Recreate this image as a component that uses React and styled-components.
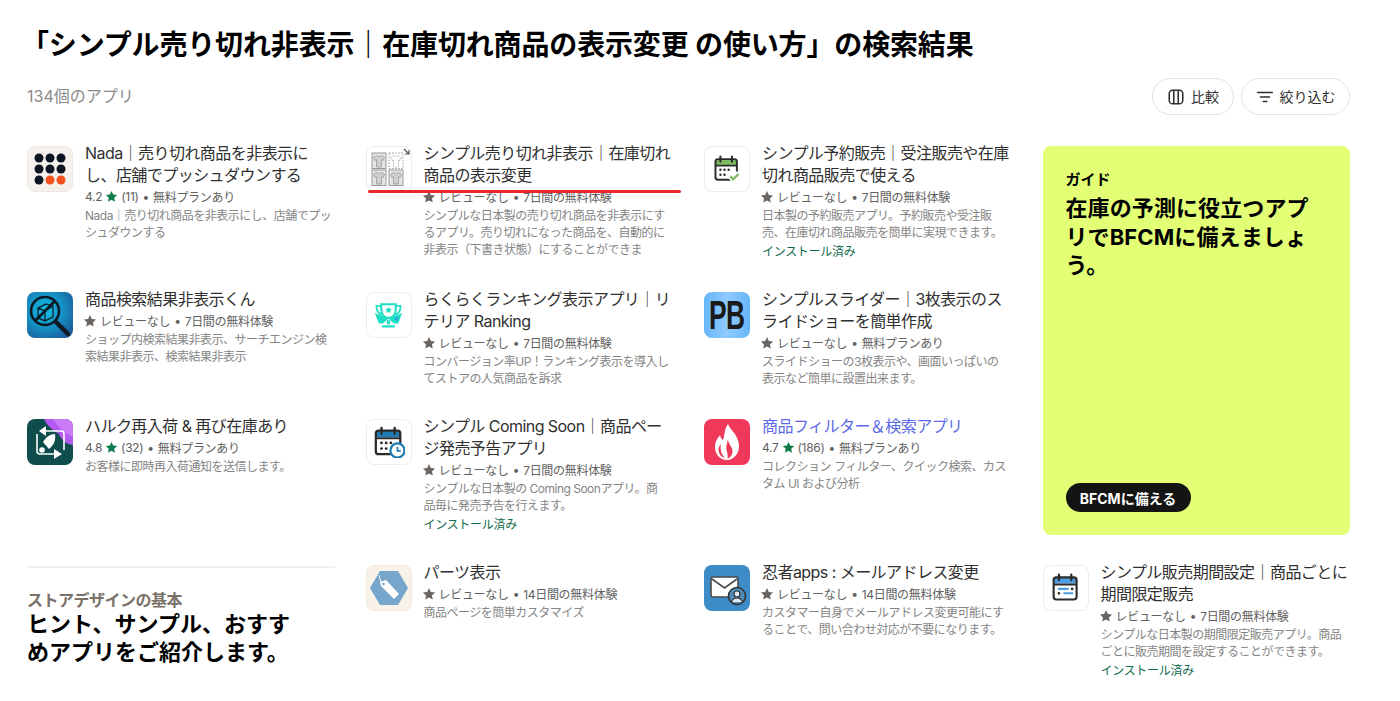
import React from 'react';
import styled, { createGlobalStyle } from 'styled-components';

const GlobalStyle = createGlobalStyle`
  html, body {
    margin: 0;
    padding: 0;
    background: #fff;
    font-family: Inter, "Noto Sans CJK JP", sans-serif;
    font-feature-settings: "pkna";
    color: #303030;
  }
`;

const Page = styled.main`
  padding: 27px 50px 0 27px;
  height: 674px;
  overflow: hidden;
`;

const Heading = styled.h1`
  margin: 0 0 15px -6px;
  font-size: 28px;
  line-height: 36px;
  font-weight: 700;
  letter-spacing: -0.15px;
  color: #000;
  white-space: nowrap;
`;

const Toolbar = styled.div`
  display: flex;
  align-items: center;
  justify-content: space-between;
  height: 37px;
  margin-bottom: 31px;
`;

const Count = styled.span`
  padding-bottom: 3px;
  font-size: 16px;
  color: #8a8a8a;
`;

const Actions = styled.div`
  display: flex;
  gap: 7px;
`;

const PillButton = styled.button`
  display: flex;
  align-items: center;
  justify-content: center;
  gap: 6px;
  width: ${p => p.$width}px;
  height: 37px;
  padding: 0 0 2px;
  border: 1px solid #e3e3e3;
  border-radius: 19px;
  background: #fff;
  font: inherit;
  font-size: 14px;
  color: #303030;

  svg {
    flex: none;
    margin-top: 2px;
  }
`;

const Results = styled.section`
  display: grid;
  grid-template-columns: repeat(4, 1fr);
  grid-template-rows: 116px 97px 116px auto;
  column-gap: 31px;
  row-gap: 30px;
`;

const Card = styled.article`
  position: relative;
  display: flex;
  gap: 12px;
  min-width: 0;
`;

const Tile = styled.div`
  flex: none;
  display: flex;
  align-items: center;
  justify-content: center;
  width: 46px;
  height: 46px;
  box-sizing: border-box;
  border-radius: 8px;
  overflow: hidden;
  background: ${p => p.$bg || '#fff'};
  border: ${p => (p.$line ? `1px solid ${p.$line}` : 'none')};

  svg {
    display: block;
    flex: none;
  }
`;

const Monogram = styled.span`
  font-family: "Liberation Sans", sans-serif;
  font-size: 40px;
  line-height: 46px;
  font-weight: 700;
  letter-spacing: -1px;
  color: #1a1a1a;
  transform: scaleX(0.66);
`;

const Body = styled.div`
  min-width: 0;
  flex: 1;
  margin-top: -4px;
`;

const Title = styled.div`
  font-size: 16px;
  line-height: 22px;
  letter-spacing: -0.55px;
  color: ${p => (p.$link ? '#5c6ae6' : '#303030')};
  white-space: pre;
`;

const Meta = styled.div`
  display: flex;
  align-items: center;
  gap: 3px;
  height: 21px;
  font-size: 12px;
  letter-spacing: -0.3px;
  color: #616161;
  white-space: nowrap;
`;

const Bullet = styled.span`
  margin: 0 1px;
`;

const StarShape = styled.svg`
  flex: none;
  margin-left: ${p => (p.$flush ? '-2px' : '0')};
`;

const Description = styled.div`
  font-size: 12px;
  line-height: 17px;
  letter-spacing: -0.5px;
  color: #858585;
  white-space: pre;
`;

const Installed = styled.div`
  margin-top: 2px;
  font-size: 12px;
  line-height: 18px;
  letter-spacing: -0.3px;
  color: #0f6b4d;
`;

const RedMark = styled.div`
  position: absolute;
  left: 2px;
  top: 44px;
  width: 313px;
  height: 3px;
  border-radius: 2px;
  background: #e8262b;
`;

const GuideCard = styled.aside`
  grid-column: 4;
  grid-row: 1 / span 3;
  display: flex;
  flex-direction: column;
  align-items: flex-start;
  padding: 24px 30px 23px 23px;
  border-radius: 8px;
  background: #e2ff75;
  color: #000;
`;

const GuideLabel = styled.div`
  font-size: 15px;
  line-height: 20px;
  font-weight: 700;
`;

const GuideTitle = styled.div`
  margin-top: 4px;
  font-size: 22px;
  line-height: 28.5px;
  font-weight: 700;
  letter-spacing: 0.1px;
  white-space: pre-line;
`;

const GuideButton = styled.button`
  margin-top: auto;
  height: 29px;
  width: 125px;
  padding: 0;
  border: 0;
  border-radius: 15px;
  background: #141414;
  color: #fff;
  font: inherit;
  font-size: 14px;
  font-weight: 700;
`;

const Basics = styled.div`
  margin-top: 1px;
  padding-top: 22px;
  border-top: 2px solid #f1f1f1;
`;

const BasicsLabel = styled.div`
  font-size: 16px;
  line-height: 20px;
  letter-spacing: -0.5px;
  font-weight: 700;
  color: #7a7168;
`;

const BasicsTitle = styled.div`
  font-size: 22px;
  line-height: 28px;
  font-weight: 700;
  color: #000;
  white-space: pre-line;
`;

const Star = ({ color = '#6b6561', size = 14, flush }) => (
  <StarShape $flush={flush} width={size} height={size} viewBox="0 0 20 20" fill={color}>
    <path d="M10 1.500l2.600 5.600 6.100.7-4.500 4.200 1.200 6L10 15l-5.400 3 1.200-6-4.500-4.200 6.100-.7z" />
  </StarShape>
);

const CalendarBase = ({ head, size = 34, children }) => (
  <svg width={size} height={size} viewBox="0 0 34 34">
    <path d="M3 12V7a2 2 0 0 1 2-2h22a2 2 0 0 1 2 2v5z" fill={head} />
    <rect x="3" y="5" width="26" height="25" rx="3" fill="none" stroke="#2b2b2b" strokeWidth="2.400" />
    <path d="M3 13h26" stroke="#2b2b2b" strokeWidth="2.200" />
    <path d="M9 2v6M23 2v6" stroke="#2b2b2b" strokeWidth="2.600" strokeLinecap="round" />
    {children}
  </svg>
);

const dots = [[9, 18], [14, 18], [19, 18], [9, 24], [14, 24]];
const Dots = () => dots.map(([cx, cy]) => <circle key={`${cx}-${cy}`} cx={cx} cy={cy} r="1.500" fill="#2b2b2b" />);

const NadaIcon = () => (
  <svg width="32" height="32" viewBox="0 0 32 32">
    {[0, 1, 2].map(r => [0, 1, 2].map(c => (
      <circle key={`${r}${c}`} cx={5 + c * 11} cy={5 + r * 11} r="4.500" fill={r === 2 && c > 0 ? '#f4511e' : '#0c1424'} />
    )))}
  </svg>
);

const Shirt = ({ x, y, dashed }) => (
  <g transform={`translate(${x} ${y})`}>
    <rect x="0" y="0" width="14" height="15.500" fill={dashed ? '#fff' : '#e4e4e4'} stroke="#9a9a9a" strokeWidth="1" strokeDasharray={dashed ? '1.500 1.500' : undefined} />
    <path d="M4.500 2.500L1.500 4.500l1.500 3 1.500-.7V14h5V6.800l1.500.7 1.500-3-3-2c-.5 1.400-3.500 1.400-4 0z" fill={dashed ? '#fff' : '#cfcfcf'} stroke="#9a9a9a" strokeWidth=".8" strokeDasharray={dashed ? '1.200 1' : undefined} />
  </g>
);

const ShirtsIcon = () => (
  <svg width="46" height="46" viewBox="0 0 46 46">
    <Shirt x={6} y={7} />
    <Shirt x={23} y={7} dashed />
    <Shirt x={6} y={24} />
    <Shirt x={23} y={24} />
    <path d="M38 3l5 5M43 4v4h-4" fill="none" stroke="#555" strokeWidth="1.200" />
  </svg>
);

const GreenCalendarIcon = () => (
  <CalendarBase head="#7dbb62" size={28}>
    <Dots />
    <circle cx="26" cy="26" r="7" fill="#fff" />
    <path d="M21 26l3.500 3.500L31 23" fill="none" stroke="#7dbb62" strokeWidth="2.800" />
  </CalendarBase>
);

const SearchIcon = () => (
  <svg width="46" height="46" viewBox="0 0 46 46">
    <defs>
      <radialGradient id="searchBg" cx="40%" cy="40%" r="70%">
        <stop offset="0%" stopColor="#12c0e4" />
        <stop offset="55%" stopColor="#1590c4" />
        <stop offset="100%" stopColor="#1c5f9c" />
      </radialGradient>
    </defs>
    <rect width="46" height="46" fill="url(#searchBg)" />
    <circle cx="18" cy="19" r="14" fill="none" stroke="#0b1a24" strokeWidth="2.600" />
    <path d="M11 16l8-4 7 2v11l-8 4-7-3zM11 16l7 3 8-5M18 19v10" fill="none" stroke="#0b2a3a" strokeWidth="1.400" />
    <path d="M8 29L28 9" stroke="#0b1a24" strokeWidth="2.600" />
    <path d="M29 30l12 12" stroke="#0b1a24" strokeWidth="4.500" strokeLinecap="round" />
  </svg>
);

const TrophyIcon = () => (
  <svg width="29" height="29" viewBox="0 0 36 36">
    <path d="M9 4h18v7c0 6-4 10-9 10s-9-4-9-10z" fill="none" stroke="#1fe0c4" strokeWidth="2.600" />
    <path d="M9 6H3c0 6 2 10 7 11M27 6h6c0 6-2 10-7 11" fill="none" stroke="#1fe0c4" strokeWidth="2.200" />
    <path d="M18 7l1.300 2.700 3 .3-2.200 2 .6 3-2.700-1.500L15.300 15l.6-3-2.200-2 3-.3z" fill="#1fe0c4" />
    <path d="M1 15l10 4 7 3-7 6H6zM35 15l-10 4-7 3 7 6h5z" fill="#1fe0c4" />
    <path d="M24 22l6-3v6z" fill="#2ba8e0" />
    <path d="M16 24h4v5h-4zM10 30h16v3H10z" fill="#1fe0c4" />
  </svg>
);

const PlainCalendarClock = () => (
  <CalendarBase head="#1f7bb0" size={32}>
    <Dots />
    <circle cx="26" cy="26" r="7.500" fill="#fff" stroke="#1f7bb0" strokeWidth="2.400" />
    <path d="M26 22v4.500h3.500" fill="none" stroke="#1f7bb0" strokeWidth="1.800" />
  </CalendarBase>
);

const HulkIcon = () => (
  <svg width="46" height="46" viewBox="0 0 46 46">
    <rect width="46" height="46" fill="#0f4d4c" />
    <path d="M17 0h29v26c-7-1-12-5-14-11-5-3-12-8-15-15z" fill="#b45af2" />
    <path d="M26 0h20v18c-8-3-15-10-20-18z" fill="#c97cf6" />
    <path d="M16 12h18a3 3 0 0 1 3 3v16M30 35H13a3 3 0 0 1-3-3V15" fill="none" stroke="#fff" strokeWidth="1.600" />
    <path d="M19 7l-7 5 7 5zM27 30l8 5-8 5z" fill="#fff" />
    <path d="M28 15c1 6-1 11-6 15l-6-7c3-5 7-8 12-8z" fill="#fff" />
    <circle cx="15" cy="31" r="2.800" fill="#fff" />
  </svg>
);

const FlameIcon = () => (
  <svg width="46" height="46" viewBox="0 0 46 46">
    <path d="M24 5c2 6 10 10 11 21 .6 8-5 15-12 15s-12.500-6-12-14c.3-5 3-8 5-11 .5 2 1 4 3 5 2-5 1-11 5-16z" fill="#fff" />
    <path d="M24 20c0 5 5 8 4.500 13-.3 3-2.500 6-5 6.500 1-5-2-8-1-13 .4-2 1-4.500 1.500-6.500z" fill="#f0385a" />
    <path d="M17 25c-1 5 0 10 4 14-4-1-6-4-6.500-8-.2-2 1-4.500 2.500-6z" fill="#f0385a" />
  </svg>
);

const TagIcon = () => (
  <svg width="46" height="46" viewBox="0 0 46 46">
    <path d="M14 6h18l10 17-10 17H14L4 23z" fill="#76a6cc" />
    <path d="M14 17l6-2 13 14-5 5-13-13z" fill="#fff" />
    <path d="M15 17l-2-7" stroke="#fff" strokeWidth="1" fill="none" />
    <circle cx="17.500" cy="19" r="1.300" fill="#76a6cc" />
  </svg>
);

const MailIcon = () => (
  <svg width="46" height="46" viewBox="0 0 46 46">
    <rect x="7" y="12" width="27" height="20" rx="2" fill="#fff" stroke="#4a4a4a" strokeWidth="1.600" />
    <path d="M8 14l12.500 9L33 14" fill="none" stroke="#4a4a4a" strokeWidth="1.600" />
    <circle cx="33" cy="31" r="8.500" fill="#4d8cba" stroke="#333" strokeWidth="1.600" />
    <circle cx="33" cy="29" r="3" fill="#dfeaf3" stroke="#333" strokeWidth="1.200" />
    <path d="M27.500 37c1-3 3-4 5.500-4s4.500 1 5.500 4" fill="#dfeaf3" stroke="#333" strokeWidth="1.200" />
  </svg>
);

const ListCalendarIcon = () => (
  <CalendarBase head="#4d9ee0" size={30}>
    <path d="M8 18h12M14 23h11" stroke="#4d9ee0" strokeWidth="2.400" />
    <circle cx="24" cy="18" r="1.500" fill="#2b2b2b" />
    <circle cx="9" cy="23" r="1.500" fill="#2b2b2b" />
  </CalendarBase>
);

const ColumnsGlyph = () => (
  <svg width="18" height="18" viewBox="0 0 16 16" fill="none" stroke="#303030" strokeWidth="1.400">
    <rect x="2" y="2" width="12" height="12" rx="3" />
    <path d="M6 2v12M10 2v12" />
  </svg>
);

const FilterGlyph = () => (
  <svg width="18" height="18" viewBox="0 0 16 16" stroke="#303030" strokeWidth="1.400" strokeLinecap="round">
    <path d="M1.500 4h13M4 8h8M6.500 12h3" />
  </svg>
);

const apps = [
  {
    icon: <NadaIcon />, bg: '#f5f1ec', line: '#ece7e1',
    title: 'Nada｜売り切れ商品を非表示に\nし、店舗でプッシュダウンする',
    rating: '4.2', reviews: '(11)', plan: '無料プランあり',
    text: 'Nada｜売り切れ商品を非表示にし、店舗でプッ\nシュダウンする',
  },
  {
    icon: <ShirtsIcon />, line: '#ececec', mark: true,
    title: 'シンプル売り切れ非表示｜在庫切れ\n商品の表示変更',
    plan: '7日間の無料体験',
    text: 'シンプルな日本製の売り切れ商品を非表示にす\nるアプリ。売り切れになった商品を、自動的に\n非表示（下書き状態）にすることができま',
  },
  {
    icon: <GreenCalendarIcon />, line: '#ececec',
    title: 'シンプル予約販売｜受注販売や在庫\n切れ商品販売で使える',
    plan: '7日間の無料体験',
    text: '日本製の予約販売アプリ。予約販売や受注販\n売、在庫切れ商品販売を簡単に実現できます。',
    installed: true,
  },
  {
    icon: <SearchIcon />,
    title: '商品検索結果非表示くん',
    plan: '7日間の無料体験',
    text: 'ショップ内検索結果非表示、サーチエンジン検\n索結果非表示、検索結果非表示',
  },
  {
    icon: <TrophyIcon />, line: '#ececec',
    title: 'らくらくランキング表示アプリ｜リ\nテリア Ranking',
    plan: '7日間の無料体験',
    text: 'コンバージョン率UP！ランキング表示を導入し\nてストアの人気商品を訴求',
  },
  {
    icon: <Monogram>PB</Monogram>, bg: 'linear-gradient(90deg, #66b5fa, #8ecbff 50%, #66b5fa)',
    title: 'シンプルスライダー｜3枚表示のス\nライドショーを簡単作成',
    plan: '無料プランあり',
    text: 'スライドショーの3枚表示や、画面いっぱいの\n表示など簡単に設置出来ます。',
  },
  {
    icon: <HulkIcon />,
    title: 'ハルク再入荷 & 再び在庫あり',
    rating: '4.8', reviews: '(32)', plan: '無料プランあり',
    text: 'お客様に即時再入荷通知を送信します。',
  },
  {
    icon: <PlainCalendarClock />, line: '#ececec',
    title: 'シンプル Coming Soon｜商品ペー\nジ発売予告アプリ',
    plan: '7日間の無料体験',
    text: 'シンプルな日本製の Coming Soonアプリ。商\n品毎に発売予告を行えます。',
    installed: true,
  },
  {
    icon: <FlameIcon />, bg: '#f0385a', link: true,
    title: '商品フィルター＆検索アプリ',
    rating: '4.7', reviews: '(186)', plan: '無料プランあり',
    text: 'コレクション フィルター、クイック検索、カス\nタム UI および分析',
  },
];

const lastRow = [
  {
    icon: <TagIcon />, bg: '#f8f2eb', line: '#efe6dc',
    title: 'パーツ表示',
    plan: '14日間の無料体験',
    text: '商品ページを簡単カスタマイズ',
  },
  {
    icon: <MailIcon />, bg: '#3d8cc8',
    title: '忍者apps : メールアドレス変更',
    plan: '14日間の無料体験',
    text: 'カスタマー自身でメールアドレス変更可能にす\nることで、問い合わせ対応が不要になります。',
  },
  {
    icon: <ListCalendarIcon />, line: '#ececec',
    title: 'シンプル販売期間設定｜商品ごとに\n期間限定販売',
    plan: '7日間の無料体験',
    text: 'シンプルな日本製の期間限定販売アプリ。商品\nごとに販売期間を設定することができます。',
    installed: true,
  },
];

const AppCard = ({ app }) => (
  <Card>
    <Tile $bg={app.bg} $line={app.line}>{app.icon}</Tile>
    <Body>
      <Title $link={app.link}>{app.title}</Title>
      <Meta>
        {app.rating ? (
          <>
            <span>{app.rating}</span>
            <Star color="#0f7a4a" size={13} />
            <span>{app.reviews}</span>
          </>
        ) : (
          <>
            <Star flush />
            <span>レビューなし</span>
          </>
        )}
        <Bullet>•</Bullet>
        <span>{app.plan}</span>
      </Meta>
      <Description>{app.text}</Description>
      {app.installed && <Installed>インストール済み</Installed>}
    </Body>
    {app.mark && <RedMark />}
  </Card>
);

export default function App() {
  return (
    <Page>
      <GlobalStyle />
      <Heading>「シンプル売り切れ非表示｜在庫切れ商品の表示変更 の使い方」の検索結果</Heading>
      <Toolbar>
        <Count>134個のアプリ</Count>
        <Actions>
          <PillButton $width={82}><ColumnsGlyph />比較</PillButton>
          <PillButton $width={109}><FilterGlyph />絞り込む</PillButton>
        </Actions>
      </Toolbar>
      <Results>
        {apps.slice(0, 3).map(app => <AppCard key={app.title} app={app} />)}
        <GuideCard>
          <GuideLabel>ガイド</GuideLabel>
          <GuideTitle>{'在庫の予測に役立つアプ\nリでBFCMに備えましょ\nう。'}</GuideTitle>
          <GuideButton>BFCMに備える</GuideButton>
        </GuideCard>
        {apps.slice(3).map(app => <AppCard key={app.title} app={app} />)}
        <Basics>
          <BasicsLabel>ストアデザインの基本</BasicsLabel>
          <BasicsTitle>{'ヒント、サンプル、おすす\nめアプリをご紹介します。'}</BasicsTitle>
        </Basics>
        {lastRow.map(app => <AppCard key={app.title} app={app} />)}
      </Results>
    </Page>
  );
}
